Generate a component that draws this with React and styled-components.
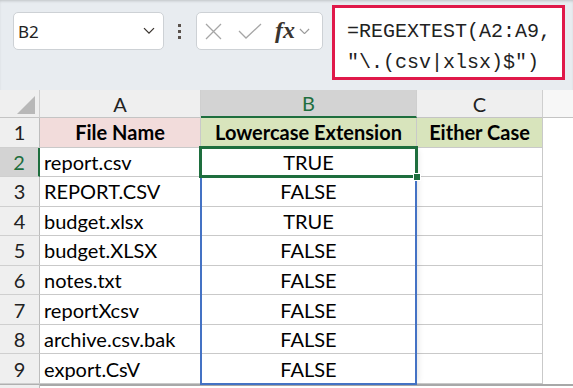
import React from 'react'
import styled, { createGlobalStyle, css } from 'styled-components'

const GlobalStyle = createGlobalStyle`
  body { margin: 0; background: #fff; }
`

const CELL_FONT = `Lato, "Open Sans", sans-serif`

const Page = styled.div`
  width: 573px;
  height: 388px;
  overflow: hidden;
  display: flex;
  flex-direction: column;
  background: #fff;
`

const Toolbar = styled.div`
  height: 90px;
  flex: none;
  display: flex;
  align-items: flex-start;
  padding: 0 0 0 13px;
  box-sizing: border-box;
  background: #e8ecf0;
  box-shadow: inset 0 2px 3px -1px rgba(0, 0, 0, 0.18);
`

const NameBox = styled.div`
  margin-top: 12px;
  width: 151px;
  height: 38px;
  box-sizing: border-box;
  border: 1px solid #cdd1d5;
  border-radius: 5px;
  background: #fff;
  display: flex;
  align-items: center;
  justify-content: space-between;
  padding: 0 8px 0 4px;
  font-family: "Noto Sans", "Open Sans", sans-serif;
  font-size: 17px;
  color: #222;
`

const Dots = styled.div`
  margin: 24px 0 0 14px;
  width: 4px;
  display: flex;
  flex-direction: column;
  gap: 3px;
  span {
    width: 3px;
    height: 3px;
    background: #5a524c;
    display: block;
  }
`

const FxBox = styled.div`
  margin: 12px 0 0 14px;
  width: 127px;
  height: 38px;
  box-sizing: border-box;
  border: 1px solid #cdd1d5;
  border-radius: 5px;
  background: #fff;
  display: flex;
  align-items: center;
  padding: 0 4px 0 8px;
`

const Fx = styled.span`
  font-family: "Liberation Serif", serif;
  font-style: italic;
  font-weight: 700;
  font-size: 24px;
  color: #3a342f;
  margin: 0 4px 2px 13px;
`

const FormulaBox = styled.div`
  margin: 5px 0 0 9px;
  width: 233px;
  height: 75px;
  box-sizing: border-box;
  border: 3px solid #e0194a;
  background: #fff;
  padding: 8px 0 0 12px;
  font-family: "Liberation Mono", monospace;
  font-size: 20px;
  line-height: 31px;
  color: #222;
  white-space: pre;
`

const Sheet = styled.div`
  flex: 1;
  display: grid;
  grid-template-columns: 40px 161px 216px 126px 1fr;
  grid-template-rows: 28px repeat(9, 29.55px) 1fr;
  font-family: ${CELL_FONT};
  font-size: 20px;
  color: #000;
`

const place = css`
  grid-row: ${p => p.$r};
  grid-column: ${p => p.$c};
`

const ColHead = styled.div`
  ${place};
  background: ${p => (p.$active ? '#d3d3d3' : '#efefef')};
  color: ${p => (p.$active ? '#1e6e3e' : '#222')};
  border-right: 1px solid #cfcfcf;
  border-bottom: ${p => (p.$active ? '2px solid #1e6e3e' : '1px solid #c4c4c4')};
  box-sizing: border-box;
  display: flex;
  align-items: center;
  justify-content: center;
`

const Corner = styled(ColHead)`
  align-items: flex-end;
  justify-content: flex-end;
  padding: 0 4px 3px 0;
`

const Filler = styled(ColHead)`
  background: #f7f7f7;
  border-right: none;
`

const RowHead = styled.div`
  ${place};
  background: ${p => (p.$active ? '#d3d3d3' : '#efefef')};
  color: ${p => (p.$active ? '#1e6e3e' : '#222')};
  border-right: ${p => (p.$active ? '2px solid #1e6e3e' : '1px solid #bdbdbd')};
  border-bottom: 1px solid #cfcfcf;
  box-sizing: border-box;
  display: flex;
  align-items: center;
  justify-content: center;
`

const Cell = styled.div`
  ${place};
  background: ${p => p.$fill || '#fff'};
  font-weight: ${p => (p.$bold ? 700 : 400)};
  border-right: 1px solid #c9c9c9;
  border-bottom: 1px solid #c9c9c9;
  box-sizing: border-box;
  display: flex;
  align-items: center;
  justify-content: ${p => (p.$center ? 'center' : 'flex-start')};
  padding: 0 4px;
  white-space: nowrap;
  overflow: hidden;
`

const Foot = styled.div`
  ${place};
  background: #fff;
  border-top: 2px solid #a8a8a8;
`

const FootHead = styled.div`
  ${place};
  background: #efefef;
  border-right: 1px solid #bdbdbd;
  border-top: 1px solid #b0b0b0;
`

const SpillRange = styled.div`
  grid-column: 3;
  grid-row: 3 / 11;
  margin: -1px 0 -1px -1px;
  border: 2px solid #4472c4;
  pointer-events: none;
  box-shadow: 4px 0 6px -3px rgba(0, 0, 0, 0.12);
`

const ActiveCell = styled.div`
  grid-column: 3;
  grid-row: 3;
  margin: -2px -1px -1px -2px;
  border: 3px solid #1e6e3e;
  pointer-events: none;
  position: relative;
  &::after {
    content: '';
    position: absolute;
    right: -6px;
    bottom: -6px;
    width: 6px;
    height: 6px;
    background: #1e6e3e;
    border: 1px solid #fff;
  }
`

const Chevron = ({ color, size = 12 }) => (
  <svg width={size} height={size * 0.6} viewBox="0 0 12 7" fill="none">
    <path d="M1 1l5 5 5-5" stroke={color} strokeWidth="1.3" />
  </svg>
)

const rows = [
  ['report.csv', 'TRUE'],
  ['REPORT.CSV', 'FALSE'],
  ['budget.xlsx', 'TRUE'],
  ['budget.XLSX', 'FALSE'],
  ['notes.txt', 'FALSE'],
  ['reportXcsv', 'FALSE'],
  ['archive.csv.bak', 'FALSE'],
  ['export.CsV', 'FALSE'],
]

export default function App() {
  return (
    <Page>
      <GlobalStyle />
      <Toolbar>
        <NameBox>
          <span>B2</span>
          <Chevron color="#3a342f" />
        </NameBox>
        <Dots><span /><span /><span /></Dots>
        <FxBox>
          <svg width="17" height="17" viewBox="0 0 17 17">
            <path d="M1 1l15 15M16 1L1 16" stroke="#a6a6a6" strokeWidth="1.3" />
          </svg>
          <svg width="24" height="17" viewBox="0 0 24 17" style={{ marginLeft: 16 }}>
            <path d="M1 8l7 7L23 1" stroke="#a6a6a6" strokeWidth="1.3" fill="none" />
          </svg>
          <Fx>fx</Fx>
          <Chevron color="#9a9a9a" size={11} />
        </FxBox>
        <FormulaBox>{'=REGEXTEST(A2:A9,\n"\\.(csv|xlsx)$")'}</FormulaBox>
      </Toolbar>
      <Sheet>
        <Corner $r={1} $c={1}>
          <svg width="18" height="18" viewBox="0 0 18 18">
            <path d="M18 0V18H0Z" fill="#b8b8b8" />
          </svg>
        </Corner>
        <ColHead $r={1} $c={2}>A</ColHead>
        <ColHead $r={1} $c={3} $active>B</ColHead>
        <ColHead $r={1} $c={4}>C</ColHead>
        <Filler $r={1} $c={5} />

        <RowHead $r={2} $c={1}>1</RowHead>
        <Cell $r={2} $c={2} $bold $center $fill="#f2dcdb">File Name</Cell>
        <Cell $r={2} $c={3} $bold $center $fill="#d8e4bc">Lowercase Extension</Cell>
        <Cell $r={2} $c={4} $bold $center $fill="#d8e4bc">Either Case</Cell>

        {rows.map(([name, result], i) => (
          <React.Fragment key={name}>
            <RowHead $r={i + 3} $c={1} $active={i === 0}>{i + 2}</RowHead>
            <Cell $r={i + 3} $c={2}>{name}</Cell>
            <Cell $r={i + 3} $c={3} $center>{result}</Cell>
            <Cell $r={i + 3} $c={4} />
          </React.Fragment>
        ))}

        <FootHead $r={11} $c={1} />
        <Foot $r={11} $c="2 / 6" />

        <SpillRange />
        <ActiveCell />
      </Sheet>
    </Page>
  )
}
